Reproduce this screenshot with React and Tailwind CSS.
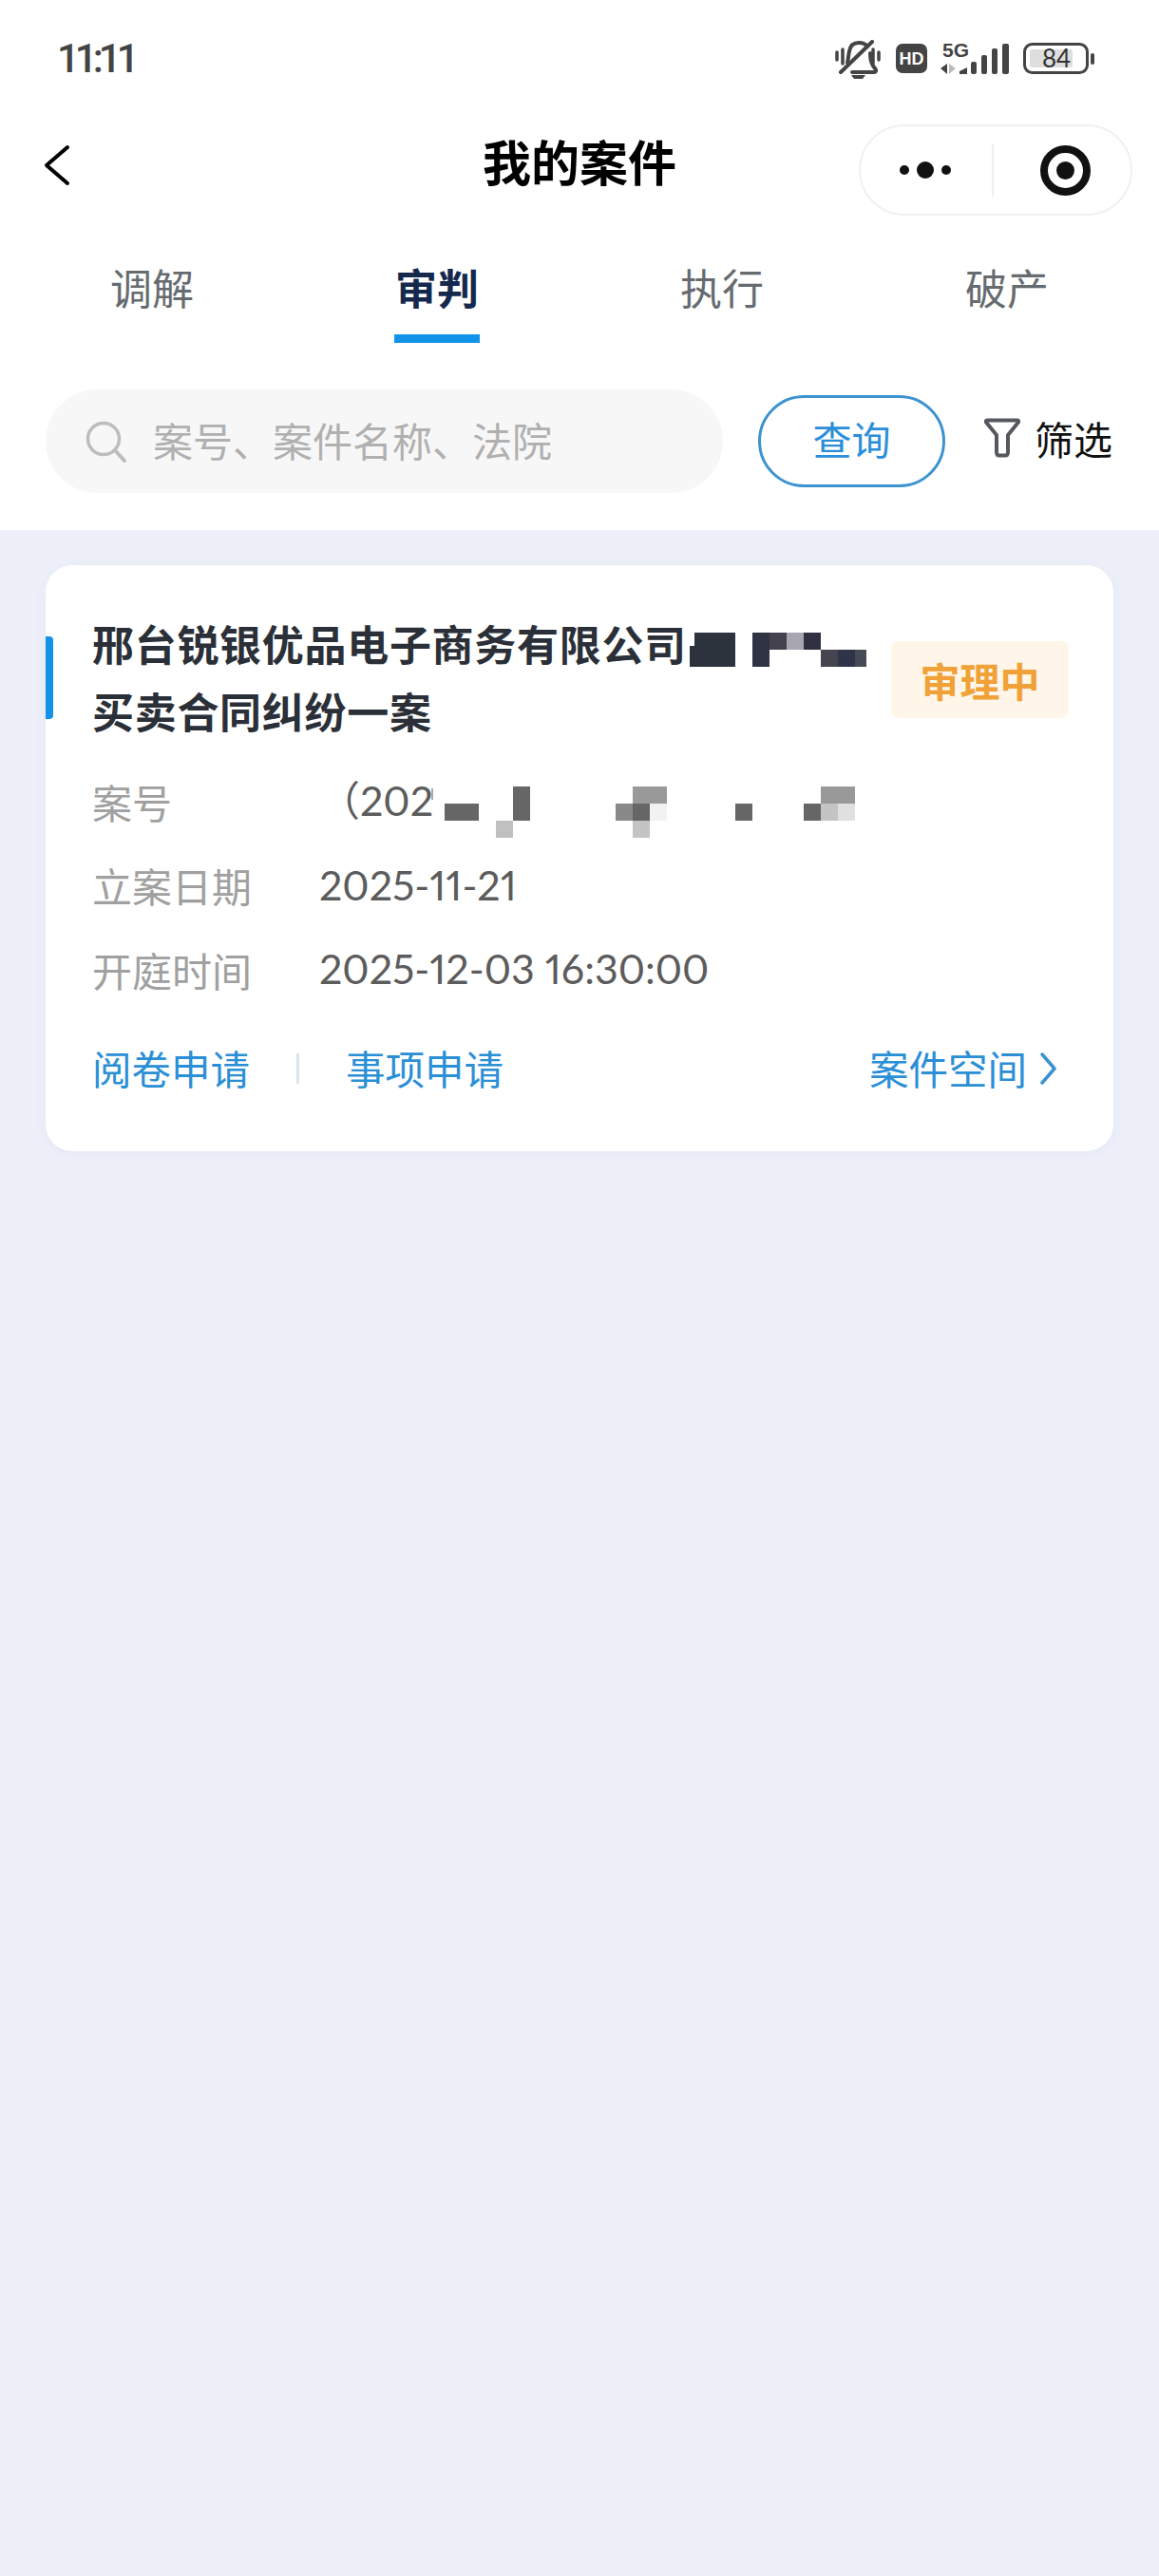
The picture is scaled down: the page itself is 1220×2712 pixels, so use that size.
const cjk = 'font-["Noto_Sans_CJK_SC","Noto_Sans",sans-serif]';

// redacted mosaic blocks, card coordinates: x, y, w, h, colour
const mosaic = [
  [678, 85, 5, 22, '#2d333d'],
  [683, 71, 43, 36, '#2d333d'],
  [744, 71, 18, 36, '#2f3344'],
  [762, 71, 18, 18, '#45424f'],
  [780, 71, 18, 18, '#a8a6b0'],
  [798, 71, 18, 18, '#2f3140'],
  [816, 89, 18, 18, '#45444f'],
  [834, 89, 18, 18, '#2f3448'],
  [852, 89, 12, 18, '#474b55'],
  [406, 235, 2, 12, '#aaaaaa'],
  [420, 251, 36, 18, '#666666'],
  [492, 233, 18, 36, '#666666'],
  [474, 269, 18, 18, '#c0c0c0'],
  [600, 251, 18, 18, '#888888'],
  [618, 251, 18, 18, '#666666'],
  [636, 251, 18, 18, '#f2f2f2'],
  [618, 233, 36, 18, '#999999'],
  [618, 269, 18, 18, '#c4c4c4'],
  [726, 251, 18, 18, '#666666'],
  [798, 251, 18, 18, '#666666'],
  [816, 251, 18, 18, '#c4c4c4'],
  [834, 251, 18, 18, '#e0e0e0'],
  [816, 233, 36, 18, '#999999'],
];

function StatusIcons() {
  return (
    <svg width="276" height="44" viewBox="0 0 276 44" fill="none">
      {/* muted bell */}
      <path d="M5 13v8M11 10v15M43 10v15M49 13v8" stroke="#444" strokeWidth="3.5" strokeLinecap="round" />
      <path d="M16 24c1-4 1-8 2-12 1-6 5-9 10-9 4 0 7 1 9 4M40 14c0 7 1 12 5 16 2 2 1 4-1 4H21" stroke="#444" strokeWidth="4" strokeLinecap="round" />
      <path d="M9 34 42 2" stroke="#444" strokeWidth="4" strokeLinecap="round" />
      <path d="M20 37h15l-3 4h-9z" fill="#444" />
      {/* HD */}
      <rect x="67" y="4" width="33" height="31" rx="7" fill="#444" />
      <text x="83.500" y="26" textAnchor="middle" fill="#fff" fontFamily="Liberation Sans" fontWeight="700" fontSize="18">HD</text>
      {/* 5G + signal */}
      <text x="116" y="18" fill="#444" fontFamily="Liberation Sans" fontWeight="700" fontSize="21">5G</text>
      <path d="M121 25v11l-7-6z" fill="#444" />
      <path d="M123 25v11l7-6z" fill="#bbbbbb" />
      <path d="M134 36v-3l8-4v7z" fill="#444" />
      <rect x="146" y="23" width="6" height="13" rx="2" fill="#444" />
      <rect x="157" y="16" width="6" height="20" rx="2" fill="#444" />
      <rect x="168" y="9" width="6" height="27" rx="2" fill="#444" />
      <rect x="179" y="4" width="7" height="32" rx="2" fill="#444" />
      {/* battery */}
      <rect x="202.500" y="4.500" width="66" height="30" rx="8" stroke="#444" strokeWidth="3" />
      <rect x="208" y="10" width="45" height="19" rx="2" fill="#dedede" />
      <text x="236" y="29" textAnchor="middle" fill="#333" fontFamily="Lato" fontSize="26">84</text>
      <rect x="272" y="14" width="4" height="12" rx="2" fill="#444" />
    </svg>
  );
}

function InfoRow({ label, children }) {
  return (
    <div className="flex h-[88.5px] items-center text-[42px]">
      <span className="w-[239px] text-[#a0a0a0]">{label}</span>
      <span className='font-["Lato","Noto_Sans_CJK_SC",sans-serif] text-[43px] text-[#5c5c5c] [font-variant-numeric:proportional-nums]'>{children}</span>
    </div>
  );
}

export default function App() {
  return (
    <div className={`flex h-[2712px] w-[1220px] flex-col overflow-hidden bg-[#edf0f9] ${cjk}`}>
      <div className="h-[558px] bg-white">
        {/* status bar */}
        <div className="flex h-[131px] items-start justify-between pl-[60px] pr-[68px] pt-[42px]">
          <span className='font-["Roboto",sans-serif] text-[42px] font-medium leading-[40px] tracking-[-5px] text-[#444]'>11:11</span>
          <StatusIcons />
        </div>

        {/* nav */}
        <div className="grid h-[96px] grid-cols-[1fr_auto_1fr] items-center px-[28px]">
          <svg width="28" height="44" viewBox="0 0 28 44" fill="none" className="-mt-[10px] ml-[18px]">
            <path d="M25 3 3 22l22 19" stroke="#000" strokeWidth="4" strokeLinecap="round" strokeLinejoin="round" />
          </svg>
          <h1 className="-mt-[19px] text-[51px] font-bold leading-none text-black">我的案件</h1>
          <div className="flex h-[96px] w-[288px] items-center justify-self-end rounded-full border-2 border-[#f0f0f0]">
            <div className="flex flex-1 items-center justify-center gap-[8px] pr-[2px]">
              <span className="h-[10px] w-[10px] rounded-full bg-[#111]" />
              <span className="h-[18px] w-[18px] rounded-full bg-[#111]" />
              <span className="h-[10px] w-[10px] rounded-full bg-[#111]" />
            </div>
            <span className="h-[56px] w-[2px] bg-[#f0f0f0]" />
            <div className="flex w-[144px] items-center justify-center pl-[6px]">
              <span className="flex h-[53px] w-[53px] items-center justify-center rounded-full border-[8px] border-[#111]">
                <span className="h-[19px] w-[19px] rounded-full bg-[#111]" />
              </span>
            </div>
          </div>
        </div>

        {/* tabs */}
        <div className="mt-[45px] flex px-[10px]">
          {['调解', '审判', '执行', '破产'].map((t) => (
            <div key={t} className="flex flex-1 flex-col items-center">
              <span className={`text-[44px] leading-[60px] ${t === '审判' ? 'font-bold text-[#15294f]' : 'text-[#666b70]'}`}>{t}</span>
              <span className={`mt-[20px] h-[9px] w-[90px] ${t === '审判' ? 'bg-[#1193ea]' : ''}`} />
            </div>
          ))}
        </div>

        {/* search */}
        <div className="mt-[49px] flex h-[109px] items-center pl-[48px]">
          <div className="flex h-[109px] w-[713px] items-center rounded-full bg-[#f7f7f7] pl-[42px]">
            <svg width="44" height="44" viewBox="0 0 44 44" fill="none">
              <circle cx="19" cy="19" r="16.500" stroke="#bdbdbd" strokeWidth="3.500" />
              <path d="m31 31 10 11" stroke="#bdbdbd" strokeWidth="4" strokeLinecap="round" />
            </svg>
            <span className="ml-[27px] -mt-[4px] text-[42px] text-[#b0b0b0]">案号、案件名称、法院</span>
          </div>
          <button className="ml-[37px] flex h-[97px] w-[197px] items-center justify-center rounded-full border-[3px] border-[#3c93d0] pb-[5px] text-[41px] text-[#2a8ed8]">
            查询
          </button>
          <svg width="38" height="42" viewBox="0 0 38 42" fill="none" className="ml-[41px] -mt-[8px]">
            <path d="M3 2.500h32c1 0 1.500 1 1 2L25 18v18c0 3-1.500 3.500-3 3.500h-6c-1.500 0-3-1-3-3.500V18L2 4.500c-.5-1 0-2 1-2Z" stroke="#55595e" strokeWidth="4" strokeLinejoin="round" />
          </svg>
          <span className="ml-[15px] -mt-[5px] text-[41px] text-[#111]">筛选</span>
        </div>
      </div>

      {/* case card */}
      <div className="relative mx-[48px] mt-[37px] h-[617px] rounded-[28px] bg-white px-[49px] pt-[47px] shadow-[0_2px_10px_rgba(200,205,225,0.25)]">
        <span className="absolute left-0 top-[75px] h-[87px] w-[8px] rounded-r-[4px] bg-[#1193ea]" />

        <div className="flex items-center justify-between">
          <div className="text-[44px] font-bold leading-[71px] tracking-[0.7px] text-[#2b3038]">
            邢台锐银优品电子商务有限公司
            <br />
            买卖合同纠纷一案
          </div>
          <span className="-mr-[2px] mt-[4px] flex h-[81px] w-[187px] items-center justify-center rounded-[8px] bg-[#fff6e9] text-[42px] font-bold text-[#f0a238]">
            审理中
          </span>
        </div>

        <div className="mt-[15px]">
          <InfoRow label="案号">（202</InfoRow>
          <InfoRow label="立案日期">2025-11-21</InfoRow>
          <InfoRow label="开庭时间">2025-12-03 16:30:00</InfoRow>
        </div>

        <div className="mt-[30px] flex h-[60px] items-center text-[41.500px] text-[#2b8fd6]">
          <span>阅卷申请</span>
          <span className="ml-[49px] h-[32px] w-[3px] bg-[#dbe5ee]" />
          <span className="ml-[49px]">事项申请</span>
          <span className="ml-auto">案件空间</span>
          <svg width="20" height="38" viewBox="0 0 20 38" fill="none" className="ml-[14px] mr-[8px]">
            <path d="M2 4l13 15L2 34" stroke="#3a93d0" strokeWidth="3.500" strokeLinecap="round" strokeLinejoin="round" />
          </svg>
        </div>

        {mosaic.map(([x, y, w, h, c]) => (
          <span key={`${x}-${y}`} className="absolute" style={{ left: x, top: y, width: w, height: h, background: c }} />
        ))}
      </div>
    </div>
  );
}
